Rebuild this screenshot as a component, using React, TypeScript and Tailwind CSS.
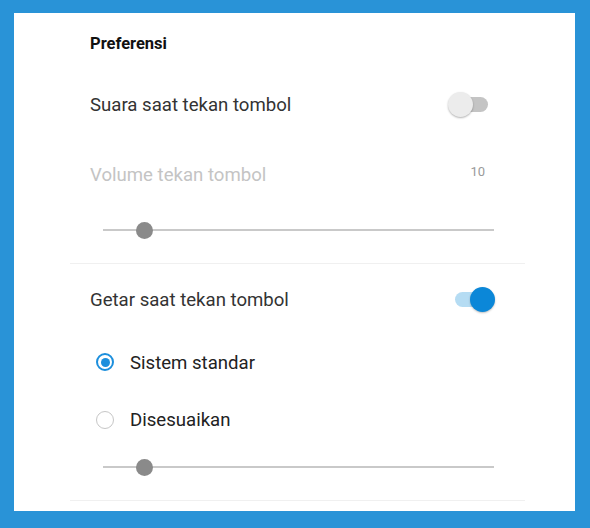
import React from 'react';

const Toggle = ({ on }: { on: boolean }) => (
  <div className="relative w-[47px] h-[25px] flex items-center">
    <div className={`ml-[7px] w-[33px] h-[15px] rounded-full ${on ? 'bg-[#b5dcf3]' : 'bg-[#c4c4c4]'}`} />
    {on ? (
      <div className="absolute right-0 top-0 w-[25px] h-[25px] rounded-full bg-[#0b87d8] shadow-[0_1px_2px_rgba(0,0,0,0.25)]" />
    ) : (
      <div className="absolute left-0 top-0 w-[25px] h-[25px] rounded-full bg-[#ececec] shadow-[0_1px_2px_rgba(0,0,0,0.3)]" />
    )}
  </div>
);

const Slider = () => (
  <div className="relative h-[18px] flex items-center">
    <div className="w-full h-[2px] bg-[#c9c9c9]" />
    <div className="absolute left-[33px] top-[1px] w-[17px] h-[17px] rounded-full bg-[#8a8a8a]" />
  </div>
);

const Radio = ({ checked, label }: { checked: boolean; label: string }) => (
  <div className="flex items-center gap-[16px] pl-[26px]">
    {checked ? (
      <div className="w-[18px] h-[18px] rounded-full border-2 border-[#1c8fdd] flex items-center justify-center">
        <div className="w-[9px] h-[9px] rounded-full bg-[#1c8fdd]" />
      </div>
    ) : (
      <div className="w-[18px] h-[18px] rounded-full border-[1.5px] border-[#c6c6c6]" />
    )}
    <span className="text-[18.6px] text-[#222] pt-[2px]">{label}</span>
  </div>
);

export default function App() {
  return (
    <div className="w-[590px] h-[528px] bg-[#2993d7] pl-[14px] pt-[13px] pr-[15px] pb-[17px] font-['Roboto',sans-serif]">
      <div className="w-full h-full bg-white pt-[11px] pl-[56px] pr-[50px] overflow-hidden">
        <div className="h-[40px] flex items-center pl-[20px]">
          <span className="text-[16.5px] font-bold text-[#111]">Preferensi</span>
        </div>
        <div className="h-[80px] flex items-center justify-between pl-[20px] pr-[30px]">
          <span className="text-[18.6px] text-[#333] pt-[4px]">Suara saat tekan tombol</span>
          <Toggle on={false} />
        </div>
        <div className="h-[64px] flex items-center justify-between pl-[20px] pr-[40px]">
          <span className="text-[18.6px] text-[#c4c4c4]">Volume tekan tombol</span>
          <span className="text-[13px] text-[#9a9a9a] -mt-[8px]">10</span>
        </div>
        <div className="h-[44px] flex items-center pl-[33px] pr-[31px]">
          <div className="w-full"><Slider /></div>
        </div>
        <div className="h-[12px] border-b border-[#f0f0f0]" />
        <div className="h-[70px] flex items-center justify-between pl-[20px] pr-[30px]">
          <span className="text-[18.6px] text-[#333] pt-[4px]">Getar saat tekan tombol</span>
          <Toggle on={true} />
        </div>
        <div className="h-[57px] flex items-center">
          <Radio checked={true} label="Sistem standar" />
        </div>
        <div className="h-[58px] flex items-center">
          <Radio checked={false} label="Disesuaikan" />
        </div>
        <div className="h-[36px] flex items-center pl-[33px] pr-[31px]">
          <div className="w-full"><Slider /></div>
        </div>
        <div className="h-[16px] border-b border-[#f0f0f0]" />
      </div>
    </div>
  );
}
